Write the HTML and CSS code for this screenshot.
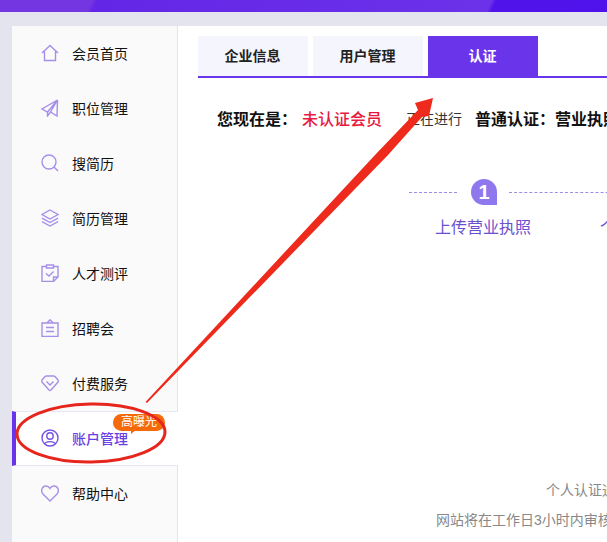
FILE: index.html
```html
<!DOCTYPE html>
<html lang="zh-CN">
<head>
    <meta charset="UTF-8">
    <meta name="viewport" content="width=device-width, initial-scale=1.0">
    <title>账户管理</title>
    <link rel="stylesheet" href="styles.css">
</head>
<body>
    <div class="top-bar"></div>
    <div class="page">
        <ul class="side-menu">
            <li class="menu-item">
                <svg class="menu-icon" viewBox="0 0 18 18"><path d="M1 9 9 1.500 17 9M3.500 7.500v9h11v-9"/></svg>
                <span>会员首页</span>
            </li>
            <li class="menu-item">
                <svg class="menu-icon" viewBox="0 0 18 18"><path d="M16.500 1 1 10l5.500 3zM16.500 1 16 17l-6.500-4zM16.500 1 6.500 13v4l3-4"/></svg>
                <span>职位管理</span>
            </li>
            <li class="menu-item">
                <svg class="menu-icon" viewBox="0 0 18 18"><circle cx="8" cy="8" r="7"/><path d="m13 13 4 4"/></svg>
                <span>搜简历</span>
            </li>
            <li class="menu-item">
                <svg class="menu-icon" viewBox="0 0 18 18"><path d="M9 1 17 5.500 9 10 1 5.500zM1 9.200 9 13.500l8-4.300M1 12.700 9 17l8-4.300"/></svg>
                <span>简历管理</span>
            </li>
            <li class="menu-item">
                <svg class="menu-icon" viewBox="0 0 18 18"><path d="M5.500 2.500H1v15h11.500l4.500-4.500V2.500h-4.500M5.500 1h7v3h-7zM5 9.500l3 2.500 4.500-4.500M17 13h-4.500v4.500"/></svg>
                <span>人才测评</span>
            </li>
            <li class="menu-item">
                <svg class="menu-icon" viewBox="0 0 18 18"><path d="M1 4h16v13.500H1zM6 4l3-3.200L12 4M5 8.500h8M5 12.500h8"/></svg>
                <span>招聘会</span>
            </li>
            <li class="menu-item">
                <svg class="menu-icon" viewBox="0 0 18 18"><path d="M5.500 2h7q1 0 1.500.5l3 3.500q.5 1 0 2l-7 8q-1 1-2 0l-7-8q-.5-1 0-2l3-3.500q.5-.5 1.500-.5zM5.500 7.500 9 11l3.500-3.500"/></svg>
                <span>付费服务</span>
            </li>
            <li class="menu-item active">
                <svg class="menu-icon" viewBox="0 0 18 18"><circle cx="9" cy="9" r="8"/><circle cx="9" cy="7" r="3.200"/><path d="M3.600 15C5 11.800 13 11.800 14.400 15"/></svg>
                <span>账户管理</span>
                <span class="badge">高曝光</span>
            </li>
            <li class="menu-item">
                <svg class="menu-icon" viewBox="0 0 18 18"><path d="M9 17 2 10C-.8 6.800 1.200 2 5 2c1.800 0 3.200 1 4 2.500C9.800 3 11.200 2 13 2c3.800 0 5.800 4.800 3 8z"/></svg>
                <span>帮助中心</span>
            </li>
        </ul>

        <div class="main">
            <div class="tabs">
                <div class="tab">企业信息</div>
                <div class="tab">用户管理</div>
                <div class="tab current">认证</div>
            </div>

            <div class="status-row">
                <span class="status-label">您现在是：</span>
                <span class="status-level">未认证会员</span>
                <span class="status-doing">正在进行</span>
                <span class="status-label">普通认证：营业执照</span>
            </div>

            <div class="steps">
                <span class="step-line short"></span>
                <span class="step-num">1</span>
                <span class="step-line long"></span>
            </div>
            <div class="step-names">
                <span>上传营业执照</span>
                <span>个人信息</span>
            </div>

            <p class="note first">个人认证通过后即可发布职位</p>
            <p class="note second">网站将在工作日3小时内审核完成，请耐心等待</p>
        </div>
    </div>

    <!-- 标注：箭头和红圈 -->
    <svg class="marks" viewBox="0 0 607 542">
        <ellipse cx="91" cy="433" rx="74" ry="29" transform="rotate(-1 91 433)"/>
        <path class="arrow" d="M145.500 402 375 155 418 110 415 103 433 98 429 116 422 117 413 127 388 155 147 403z"/>
    </svg>
</body>
</html>
```

FILE: styles.css
```css
* {
    box-sizing: border-box;
}
html, body {
    height: 100%;
}
body {
    margin: 0;
    overflow: hidden;
    background-color: #e3e4ee;
    font-family: "Liberation Sans", "Noto Sans CJK SC", sans-serif;
    color: #111;
}
.top-bar {
    height: 12px;
    background: linear-gradient(115deg, #7436e0 0, #7436e0 84px, #6326e6 88px, #6c32ea 446px, #5014ea 450px, #4f12ea 100%);
}
.page {
    display: flex;
    height: 530px;
    padding: 14px 0 0 12px;
}

/* 左侧菜单 */
.side-menu {
    flex: none;
    width: 166px;
    margin: 0;
    padding: 0;
    list-style: none;
    background-color: #fafafb;
    border-right: 1px solid #e2e4ee;
}
.menu-item {
    position: relative;
    display: flex;
    align-items: center;
    gap: 13px;
    height: 55px;
    padding: 0 0 2px 29px;
    font-size: 14px;
}
.menu-icon {
    flex: none;
    width: 18px;
    height: 18px;
    fill: none;
    stroke: #a68fe8;
    stroke-width: 1.400;
}
.menu-item.active {
    width: 166px;
    color: #6a3fe0;
    font-weight: 500;
    background-color: #fff;
    border-top: 1px solid #e6e7f0;
    border-bottom: 1px solid #e6e7f0;
    border-left: 4px solid #6a35ea;
    padding-left: 25px;
}
.menu-item.active .menu-icon {
    stroke: #7452e0;
}
.badge {
    position: absolute;
    left: 97px;
    top: 2px;
    width: 52px;
    height: 17px;
    border-radius: 9px;
    background-color: #f56a08;
    color: #fff;
    font-size: 12px;
    font-weight: 400;
    line-height: 16px;
    text-align: center;
}
.badge:after {
    content: "";
    position: absolute;
    left: 18px;
    top: 15px;
    border-top: 5px solid #f56a08;
    border-right: 6px solid transparent;
}

/* 右侧内容 */
.main {
    flex: 1;
    min-width: 0;
    padding: 10px 0 0 20px;
    background-color: #fff;
    overflow: hidden;
    white-space: nowrap;
}
.tabs {
    display: flex;
    gap: 5px;
    height: 42px;
    border-bottom: 2px solid #6a35ea;
}
.tab {
    width: 110px;
    height: 40px;
    padding-right: 1px;
    background-color: #f5f5fd;
    font-size: 14px;
    font-weight: 700;
    line-height: 40px;
    text-align: center;
    color: #222;
}
.tab.current {
    background-color: #6a35ea;
    color: #fff;
}
.status-row {
    display: flex;
    align-items: center;
    height: 24px;
    margin-top: 28px;
    padding-left: 19px;
    font-size: 16px;
}
.status-label {
    font-weight: 700;
}
.status-level {
    margin-left: 5px;
    color: #e8193f;
    font-weight: 500;
}
.status-doing {
    margin: 0 13px 0 24px;
    font-size: 14px;
    color: #333;
}
.steps {
    display: flex;
    align-items: center;
    margin: 49px 0 0 211px;
}
.step-line {
    flex: none;
    border-top: 1px dashed #a08ce8;
}
.step-line.short {
    width: 48px;
    margin-right: 14px;
}
.step-line.long {
    width: 120px;
    margin-left: 12px;
}
.step-num {
    flex: none;
    width: 26px;
    height: 26px;
    border-radius: 13px 13px 0 13px;
    background-color: #8f78ee;
    color: #fff;
    font-size: 20px;
    font-weight: 700;
    line-height: 26px;
    text-align: center;
}
.step-names {
    display: flex;
    gap: 69px;
    margin: 11px 0 0 237px;
    font-size: 16px;
    line-height: 24px;
    color: #6a50d0;
}
.note {
    margin: 0;
    font-size: 14px;
    line-height: 20px;
    color: #888;
}
.note.first {
    margin: 240px 0 0 348px;
}
.note.second {
    margin: 10px 0 0 238px;
}

/* 标注层 */
.marks {
    position: absolute;
    left: 0;
    top: 0;
    width: 607px;
    height: 542px;
}
.marks ellipse {
    fill: none;
    stroke: #e6261d;
    stroke-width: 3;
}
.marks .arrow {
    fill: #ee2a1c;
}
```
